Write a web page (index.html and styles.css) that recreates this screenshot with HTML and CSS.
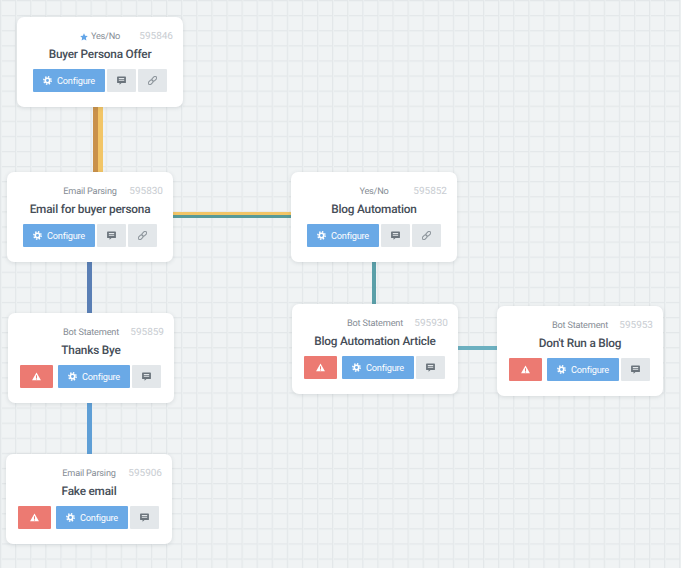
FILE: index.html
```html
<!DOCTYPE html>
<html lang="en">
<head>
<meta charset="utf-8">
<title>Bot flow</title>
<link rel="stylesheet" href="styles.css">
</head>
<body>
<svg class="defs" width="0" height="0" aria-hidden="true">
  <symbol id="i-gear" viewBox="0 0 12 12">
    <circle cx="6" cy="6" r="3" fill="none" stroke="currentColor" stroke-width="2.2"/>
    <circle cx="6" cy="6" r="4.9" fill="none" stroke="currentColor" stroke-width="2" stroke-dasharray="1.92 1.93"/>
  </symbol>
  <symbol id="i-comment" viewBox="0 0 12 12">
    <path fill="currentColor" fill-rule="evenodd" d="M1 .8h10a.9.9 0 0 1 .9.9v6.8a.9.9 0 0 1-.9.9H6L3.4 11.600V9.400H1a.9.9 0 0 1-.9-.9V1.700a.9.9 0 0 1 .9-.9zM2.400 2.800v1.100h7.200V2.800zm0 2.300v1.100h7.200V5.100z"/>
  </symbol>
  <symbol id="i-link" viewBox="0 0 12 12">
    <g fill="none" stroke="currentColor" stroke-width="1.400" transform="rotate(-45 6 6)">
      <rect x="-1" y="3.800" width="7.200" height="4.400" rx="2.200"/>
      <rect x="5.800" y="3.800" width="7.200" height="4.400" rx="2.200"/>
    </g>
  </symbol>
  <symbol id="i-warn" viewBox="0 0 12 12">
    <path fill="currentColor" fill-rule="evenodd" d="M6 .8 11.900 11H.100zM5.300 4.400v3.600h1.400V4.400zm0 4.300v1.300h1.400V8.700z"/>
  </symbol>
  <symbol id="i-star" viewBox="0 0 12 12">
    <path fill="currentColor" d="M6 .4l1.700 3.700 4 .5-2.900 2.700.8 4L6 9.300l-3.600 2 .8-4L.3 4.600l4-.5z"/>
  </symbol>
</svg>

<main class="canvas">
  <div class="wire w1a"></div>
  <div class="wire w1b"></div>
  <div class="wire w2a"></div>
  <div class="wire w2b"></div>
  <div class="wire w3"></div>
  <div class="wire w4"></div>
  <div class="wire w5"></div>
  <div class="wire w6"></div>

  <article class="node n-buyer">
    <header class="node-head"><span class="node-type"><svg class="ic star"><use href="#i-star"/></svg>Yes/No</span><span class="node-id">595846</span></header>
    <h2 class="node-title">Buyer Persona Offer</h2>
    <div class="node-actions">
      <button class="btn btn-cfg"><svg class="ic"><use href="#i-gear"/></svg>Configure</button>
      <button class="btn btn-sq"><svg class="ic"><use href="#i-comment"/></svg></button>
      <button class="btn btn-sq"><svg class="ic lnk"><use href="#i-link"/></svg></button>
    </div>
  </article>

  <article class="node n-email">
    <header class="node-head"><span class="node-type">Email Parsing</span><span class="node-id">595830</span></header>
    <h2 class="node-title">Email for buyer persona</h2>
    <div class="node-actions">
      <button class="btn btn-cfg"><svg class="ic"><use href="#i-gear"/></svg>Configure</button>
      <button class="btn btn-sq"><svg class="ic"><use href="#i-comment"/></svg></button>
      <button class="btn btn-sq"><svg class="ic lnk"><use href="#i-link"/></svg></button>
    </div>
  </article>

  <article class="node n-blog">
    <header class="node-head"><span class="node-type">Yes/No</span><span class="node-id">595852</span></header>
    <h2 class="node-title">Blog Automation</h2>
    <div class="node-actions">
      <button class="btn btn-cfg"><svg class="ic"><use href="#i-gear"/></svg>Configure</button>
      <button class="btn btn-sq"><svg class="ic"><use href="#i-comment"/></svg></button>
      <button class="btn btn-sq"><svg class="ic lnk"><use href="#i-link"/></svg></button>
    </div>
  </article>

  <article class="node n-thanks">
    <header class="node-head"><span class="node-type">Bot Statement</span><span class="node-id">595859</span></header>
    <h2 class="node-title">Thanks Bye</h2>
    <div class="node-actions">
      <button class="btn btn-warn"><svg class="ic"><use href="#i-warn"/></svg></button>
      <button class="btn btn-cfg"><svg class="ic"><use href="#i-gear"/></svg>Configure</button>
      <button class="btn btn-sq"><svg class="ic"><use href="#i-comment"/></svg></button>
    </div>
  </article>

  <article class="node n-article">
    <header class="node-head"><span class="node-type">Bot Statement</span><span class="node-id">595930</span></header>
    <h2 class="node-title">Blog Automation Article</h2>
    <div class="node-actions">
      <button class="btn btn-warn"><svg class="ic"><use href="#i-warn"/></svg></button>
      <button class="btn btn-cfg"><svg class="ic"><use href="#i-gear"/></svg>Configure</button>
      <button class="btn btn-sq"><svg class="ic"><use href="#i-comment"/></svg></button>
    </div>
  </article>

  <article class="node n-norun">
    <header class="node-head"><span class="node-type">Bot Statement</span><span class="node-id">595953</span></header>
    <h2 class="node-title">Don't Run a Blog</h2>
    <div class="node-actions">
      <button class="btn btn-warn"><svg class="ic"><use href="#i-warn"/></svg></button>
      <button class="btn btn-cfg"><svg class="ic"><use href="#i-gear"/></svg>Configure</button>
      <button class="btn btn-sq"><svg class="ic"><use href="#i-comment"/></svg></button>
    </div>
  </article>

  <article class="node n-fake">
    <header class="node-head"><span class="node-type">Email Parsing</span><span class="node-id">595906</span></header>
    <h2 class="node-title">Fake email</h2>
    <div class="node-actions">
      <button class="btn btn-warn"><svg class="ic"><use href="#i-warn"/></svg></button>
      <button class="btn btn-cfg"><svg class="ic"><use href="#i-gear"/></svg>Configure</button>
      <button class="btn btn-sq"><svg class="ic"><use href="#i-comment"/></svg></button>
    </div>
  </article>
</main>
</body>
</html>
```
FILE: styles.css
```css
* { box-sizing: border-box; }
html, body { margin: 0; height: 100%; overflow: hidden; }
body {
  font-family: Roboto, "Liberation Sans", sans-serif;
  background: #f0f3f4;
  text-rendering: geometricPrecision;
}
.defs { position: absolute; }

.canvas {
  position: relative;
  width: 681px;
  height: 568px;
  overflow: hidden;
  background-color: #f0f3f4;
  background-image:
    linear-gradient(to right, #e3e7e9 1px, #ecf0f1 1px, #ecf0f1 2px, transparent 2px),
    linear-gradient(to bottom, #e3e7e9 1px, #ecf0f1 1px, #ecf0f1 2px, transparent 2px);
  background-size: 15.1px 15.1px;
  background-position: 0 0;
}

.wire { position: absolute; }
.w1a { left: 93px; top: 100px; width: 5px; height: 80px; background: #c9914a; }
.w1b { left: 98px; top: 100px; width: 5px; height: 80px; background: #f2c566; }
.w2a { left: 165px; top: 212px; width: 130px; height: 4px; background: #f2c566; }
.w2b { left: 165px; top: 215px; width: 130px; height: 3px; background: #579a98; }
.w3 { left: 87px; top: 255px; width: 5px; height: 65px; background: #5a7fb5; }
.w4 { left: 87px; top: 395px; width: 5px; height: 65px; background: #5f9fd6; }
.w5 { left: 372px; top: 255px; width: 4px; height: 55px; background: #5a9fa8; }
.w6 { left: 450px; top: 346px; width: 55px; height: 4px; background: #6cb0c0; }

.node {
  position: absolute;
  width: 166px;
  height: 90px;
  padding: 14px 10px 0;
  background: #fff;
  border-radius: 7px;
  box-shadow: 0 1px 4px rgba(60, 70, 80, .14);
  display: flex;
  flex-direction: column;
  color: #3d4650;
}
.n-buyer { left: 17px; top: 17px; }
.n-email { left: 7px; top: 172px; }
.n-blog { left: 291px; top: 172px; }
.n-thanks { left: 8px; top: 313px; }
.n-article { left: 292px; top: 304px; }
.n-norun { left: 497px; top: 306px; }
.n-fake { left: 6px; top: 454px; }

.node-head {
  display: grid;
  grid-template-columns: 1fr auto 1fr;
  align-items: center;
  height: 11px;
}
.node-type {
  grid-column: 2;
  font-size: 9.2px;
  letter-spacing: -.2px;
  color: #868d95;
  display: inline-flex;
  align-items: center;
  gap: 3px;
  white-space: nowrap;
}
.node-id { grid-column: 3; justify-self: end; font-size: 10px; color: #c9cdd2; }
.node-title {
  margin: 5px 0 0;
  font-size: 11.8px;
  line-height: 14px;
  letter-spacing: -.2px;
  font-weight: 500;
  text-align: center;
  color: #454d57;
  white-space: nowrap;
}
.node-actions { display: flex; justify-content: center; gap: 2px; margin-top: 8px; height: 23px; }

.btn {
  border: 0;
  padding: 0;
  height: 23px;
  border-radius: 1px;
  font: inherit;
  display: inline-flex;
  align-items: center;
  justify-content: center;
}
.btn-cfg { width: 72px; background: #6aa9e6; color: #fff; font-size: 9.2px; letter-spacing: -.2px; gap: 5px; }
.btn-sq { width: 29px; background: #e3e7ea; color: #6b747c; }
.btn-warn { width: 33px; margin: 0 3px 0 -1px; background: #ec7a72; color: #fff; }
.ic { width: 9px; height: 9px; display: block; }
.lnk { color: #8c949b; }
.star { color: #62a5e8; width: 8px; height: 8px; }
```
